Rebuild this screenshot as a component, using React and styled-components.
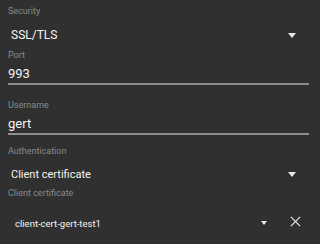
import styled, { createGlobalStyle } from "styled-components";

const Global = createGlobalStyle`
    html, body {
        margin: 0;
        padding: 0;
        background: #303030;
    }
    body {
        font-family: Roboto, "Noto Sans", sans-serif;
        color: #f2f2f2;
    }
`;

function Arrow({ small }) {
    return <Triangle $small={small} />;
}

function CloseIcon() {
    return (
        <CloseSvg viewBox="0 0 12 12">
            <path d="M1 1L11 11M11 1L1 11" />
        </CloseSvg>
    );
}

function App() {
    return (
        <>
            <Global />
            <Form>
                <Label $top={5}>Security</Label>
                <Spinner $height={31}>
                    <SpinnerText $size={12}>SSL/TLS</SpinnerText>
                    <Arrow />
                </Spinner>

                <Label $top={1}>Port</Label>
                <Input>993</Input>

                <Label $top={14}>Username</Label>
                <Input>gert</Input>

                <Label $top={10}>Authentication</Label>
                <Spinner $height={30}>
                    <SpinnerText $size={11}>Client certificate</SpinnerText>
                    <Arrow />
                </Spinner>

                <Label $top={0}>Client certificate</Label>
                <CertRow>
                    <CertSpinner>
                        <CertText>client-cert-gert-test1</CertText>
                        <Arrow small />
                    </CertSpinner>
                    <ClearButton>
                        <CloseIcon />
                    </ClearButton>
                </CertRow>
            </Form>
        </>
    );
}

const Form = styled.div`
    display: flex;
    flex-direction: column;
    padding: 0 11px 0 8px;
    width: 320px;
    height: 244px;
    box-sizing: border-box;
    overflow: hidden;
`;

const Label = styled.div`
    margin-top: ${(p) => p.$top}px;
    font-size: 9px;
    line-height: 12px;
    height: 12px;
    color: #8a8a8a;
`;

const Spinner = styled.div`
    display: flex;
    align-items: center;
    justify-content: space-between;
    height: ${(p) => p.$height}px;
    padding: 0 13px 0 3px;
`;

const SpinnerText = styled.span`
    font-size: ${(p) => p.$size}px;
    line-height: 14px;
    padding-top: 5px;
    color: #f4f4f4;
`;

const Triangle = styled.span`
    width: 0;
    height: 0;
    border-left: ${(p) => (p.$small ? 3 : 4)}px solid transparent;
    border-right: ${(p) => (p.$small ? 3 : 4)}px solid transparent;
    border-top: ${(p) => (p.$small ? 4 : 5)}px solid #e8e8e8;
    margin-top: ${(p) => (p.$small ? 3 : 5)}px;
`;

const Input = styled.div`
    margin-top: 4px;
    font-size: 13px;
    line-height: 18px;
    height: 18px;
    color: #f4f4f4;
    border-bottom: 2px solid #8e8e8e;
`;

const CertRow = styled.div`
    display: flex;
    align-items: center;
    height: 44px;
`;

const CertSpinner = styled.div`
    flex: 1;
    display: flex;
    align-items: center;
    justify-content: space-between;
    padding: 0 16px 0 7px;
`;

const CertText = styled.span`
    font-size: 9.5px;
    line-height: 14px;
    padding-top: 6px;
    color: #f4f4f4;
`;

const ClearButton = styled.div`
    width: 24px;
    display: flex;
    align-items: center;
    justify-content: center;
    margin-right: 2px;
`;

const CloseSvg = styled.svg`
    width: 11px;
    height: 11px;
    fill: none;
    stroke: #e6e6e6;
    stroke-width: 1.4;
`;

export default App;
